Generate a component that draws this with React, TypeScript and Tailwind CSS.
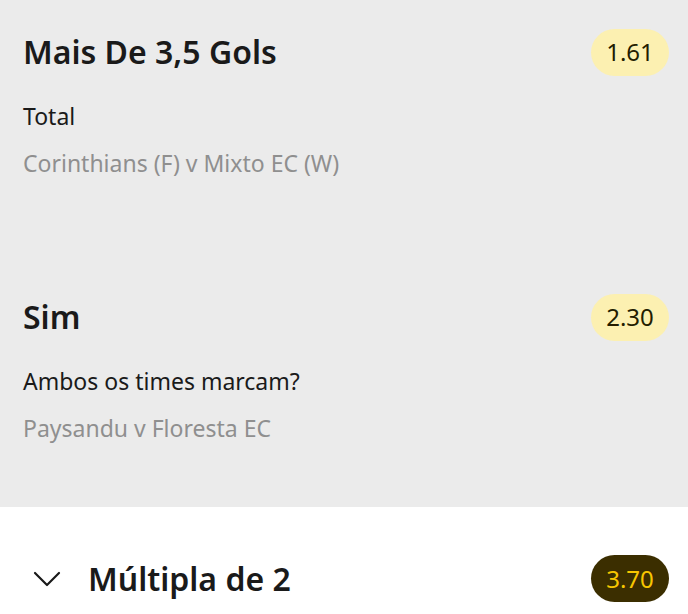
import React from "react";

function Item({ title, odds, market, teams, h }: { title: string; odds: string; market: string; teams: string; h: string }) {
  return (
    <div className={`px-[23px] pt-[28px] ${h}`}>
      <div className="flex h-[48px] items-center justify-between">
        <div className="text-[32px] font-semibold leading-none text-[#1a1a1a]">{title}</div>
        <div className="mr-[-4px] flex h-[47px] w-[78px] items-center justify-center rounded-full bg-[#fcf0b1] text-[24px] text-[#231d00]">{odds}</div>
      </div>
      <div className="mt-[26px] text-[23px] leading-[28px] text-[#1a1a1a]">{market}</div>
      <div className="mt-[19px] text-[23px] leading-[28px] text-[#8f8f8f]">{teams}</div>
    </div>
  );
}

export default function App() {
  return (
    <div className="h-[614px] w-[688px] overflow-hidden bg-white" style={{ fontFamily: '"Noto Sans", sans-serif' }}>
      <div className="bg-[#ebebeb]">
        <Item title="Mais De 3,5 Gols" odds="1.61" market="Total" teams="Corinthians (F) v Mixto EC (W)" h="h-[265px]" />
        <Item title="Sim" odds="2.30" market="Ambos os times marcam?" teams="Paysandu v Floresta EC" h="h-[242px]" />
      </div>
      <div className="flex h-[107px] items-center justify-between pl-[33px] pr-[19px] pt-[36px]">
        <div className="flex items-center">
          <svg width="28" height="16" viewBox="0 0 28 16" fill="none" stroke="#1a1a1a" strokeWidth="2.2" strokeLinecap="round" strokeLinejoin="round">
            <path d="M2 2 L14 14 L26 2" />
          </svg>
          <div className="ml-[27px] text-[32px] font-semibold leading-none text-[#1a1a1a]">Múltipla de 2</div>
        </div>
        <div className="flex h-[47px] w-[78px] items-center justify-center rounded-full bg-[#3b2e00] text-[24px] text-[#f7c600]">3.70</div>
      </div>
    </div>
  );
}
